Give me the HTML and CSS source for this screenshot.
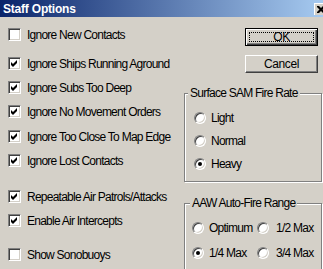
FILE: index.html
```html
<!DOCTYPE html>
<html lang="en">
<head>
  <meta charset="UTF-8">
  <title>Staff Options</title>
  <link rel="stylesheet" href="styles.css">
</head>
<body>
  <div class="dialog">
    <!-- Title bar -->
    <div class="titlebar">
      <span class="title">Staff Options</span>
      <span class="close">
        <svg width="8" height="7" viewBox="0 0 8 7"><path d="M0 0h2l2 2 2-2h2v1l-2.5 2.5L8 6v1H6L4 5 2 7H0V6l2.5-2.5L0 1z" fill="#000"/></svg>
      </span>
    </div>

    <div class="content">
      <!-- Checkbox list -->
      <div class="options">
        <label class="opt"><span class="box"></span>Ignore New Contacts</label>
        <label class="opt gap-s"><span class="box checked"></span>Ignore Ships Running Aground</label>
        <label class="opt"><span class="box checked"></span>Ignore Subs Too Deep</label>
        <label class="opt"><span class="box checked"></span>Ignore No Movement Orders</label>
        <label class="opt gap-xs"><span class="box checked"></span>Ignore Too Close To Map Edge</label>
        <label class="opt"><span class="box checked"></span>Ignore Lost Contacts</label>
        <label class="opt gap-l"><span class="box checked"></span>Repeatable Air Patrols/Attacks</label>
        <label class="opt"><span class="box checked"></span>Enable Air Intercepts</label>
        <label class="opt gap-m"><span class="box"></span>Show Sonobuoys</label>
      </div>

      <!-- Buttons and radio groups -->
      <div class="side">
        <button class="btn default"><span class="focus">OK</span></button>
        <button class="btn cancel">Cancel</button>

        <fieldset class="group sam">
          <legend>Surface SAM Fire Rate</legend>
          <div class="radios">
            <label class="radio"><span class="dot"></span>Light</label>
            <label class="radio"><span class="dot"></span>Normal</label>
            <label class="radio"><span class="dot on"></span>Heavy</label>
          </div>
        </fieldset>

        <fieldset class="group aaw">
          <legend>AAW Auto-Fire Range</legend>
          <div class="radio-grid">
            <label class="radio"><span class="dot"></span>Optimum</label>
            <label class="radio wide"><span class="dot"></span>1/2 Max</label>
            <label class="radio"><span class="dot on"></span>1/4 Max</label>
            <label class="radio wide"><span class="dot"></span>3/4 Max</label>
          </div>
        </fieldset>
      </div>
    </div>
  </div>
</body>
</html>
```

FILE: styles.css
```css
body {
  margin: 0;
  background-color: #d4d0c8;
  font-family: "Liberation Sans", Arial, sans-serif;
  font-size: 12px;
  letter-spacing: -0.75px;
  color: #000;
}

.dialog {
  width: 323px;
  height: 269px;
  overflow: hidden;
  background-color: #d4d0c8;
}

/* Title bar */
.titlebar {
  height: 17px;
  display: flex;
  align-items: center;
  justify-content: space-between;
  background: linear-gradient(to right, #0a246a, #a6caf0);
}

.title {
  padding-left: 3px;
  color: #fff;
  font-weight: bold;
  font-size: 12px;
  letter-spacing: -0.2px;
}

.close {
  width: 16px;
  height: 12px;
  margin-right: -7px;
  margin-top: 1px;
  display: flex;
  align-items: center;
  padding-left: 2px;
  box-sizing: border-box;
  background-color: #d4d0c8;
  border-top: 1px solid #fff;
  border-left: 1px solid #fff;
}

.content {
  display: flex;
}

/* Checkbox column */
.options {
  width: 184px;
  padding: 11px 0 0 8px;
  box-sizing: border-box;
  display: flex;
  flex-direction: column;
  gap: 11px;
}

.opt {
  height: 13px;
  display: flex;
  align-items: center;
  gap: 6px;
  white-space: nowrap;
}

.gap-xs { margin-top: 1px; }
.gap-s { margin-top: 5px; }
.gap-m { margin-top: 10px; }
.gap-l { margin-top: 12px; }

.box {
  width: 13px;
  height: 13px;
  flex: none;
  box-sizing: border-box;
  background-color: #fff;
  border-top: 1px solid #808080;
  border-left: 1px solid #808080;
  border-bottom: 1px solid #fff;
  border-right: 1px solid #fff;
  box-shadow: inset 1px 1px 0 #404040, inset -1px -1px 0 #d4d0c8;
}

.box.checked {
  background: #fff url("data:image/svg+xml,%3Csvg xmlns='http://www.w3.org/2000/svg' width='11' height='11'%3E%3Cpath d='M2 4l2 2 4-4v3l-4 4-2-2z' fill='%23000'/%3E%3C/svg%3E") no-repeat 0 0;
}

/* Right column */
.side {
  width: 139px;
  display: flex;
  flex-direction: column;
}

.btn {
  width: 73px;
  height: 18px;
  margin-left: 61px;
  padding: 0;
  font-family: inherit;
  font-size: 12px;
  letter-spacing: -0.4px;
  color: #000;
  background-color: #d4d0c8;
  box-sizing: border-box;
}

.btn.default {
  margin-top: 11px;
  border: 1px solid #000;
  box-shadow: inset 1px 1px 0 #fff, inset -1px -1px 0 #404040, inset -2px -2px 0 #808080;
  padding: 3px;
}

.focus {
  display: flex;
  align-items: center;
  justify-content: center;
  height: 100%;
  border: 1px dotted #000;
  box-sizing: border-box;
}

.btn.cancel {
  margin-top: 9px;
  border-top: 1px solid #fff;
  border-left: 1px solid #fff;
  border-bottom: 1px solid #404040;
  border-right: 1px solid #404040;
  box-shadow: inset -1px -1px 0 #808080;
}

/* Group boxes */
.group {
  width: 138px;
  min-width: 0;
  margin: 0;
  padding: 0;
  box-sizing: border-box;
  border: 1px solid #808080;
  box-shadow: 1px 1px 0 #fff, inset 1px 1px 0 #fff;
}

.group legend {
  padding: 0 2px;
  margin-left: 3px;
  line-height: 14px;
  white-space: nowrap;
  background-color: #d4d0c8;
}

.sam {
  margin-top: 13px;
  height: 96px;
}

.aaw {
  margin-top: 14px;
  height: 90px;
}

.aaw legend {
  margin-left: 5px;
}

.radios {
  padding: 6px 0 0 9px;
  display: flex;
  flex-direction: column;
}

.radio-grid {
  padding: 5px 0 0 7px;
  display: grid;
  grid-template-columns: 65px auto;
}

.radio {
  height: 23px;
  display: flex;
  align-items: center;
  gap: 5px;
  white-space: nowrap;
}

.radio-grid .radio {
  height: 25px;
  gap: 5px;
}

.radio-grid .radio.wide {
  gap: 7px;
}

.dot {
  width: 12px;
  height: 12px;
  flex: none;
  box-sizing: border-box;
  border-radius: 50%;
  background-color: #fff;
  border: 1px solid;
  border-color: #808080 #fff #fff #808080;
  box-shadow: inset 1px 1px 0 #404040, inset -1px -1px 0 #d4d0c8;
  display: flex;
  align-items: center;
  justify-content: center;
}

.dot.on::after {
  content: "";
  width: 4px;
  height: 4px;
  border-radius: 50%;
  background-color: #000;
}
```
